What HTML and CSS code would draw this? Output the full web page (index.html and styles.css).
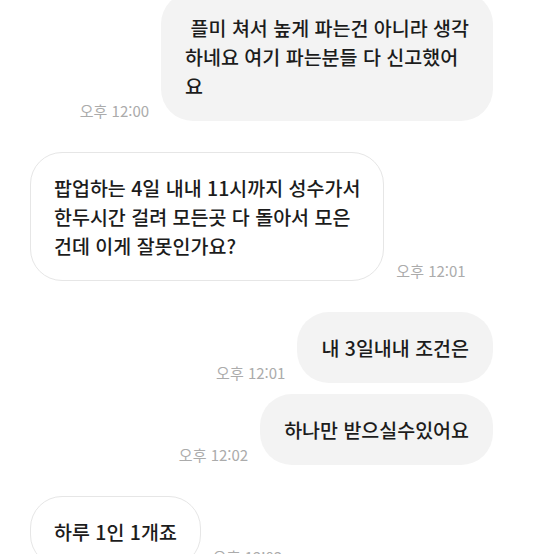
FILE: index.html
```html
<!DOCTYPE html>
<html lang="ko">
  <head>
    <meta charset="UTF-8" />
    <meta name="viewport" content="width=device-width, initial-scale=1.0" />
    <title>채팅</title>
    <link rel="stylesheet" href="styles.css">
  </head>
  <body>
    <main class="chat">
      <!-- 내 메시지 -->
      <div class="row mine">
        <span class="time">오후 12:00</span>
        <p class="bubble">&nbsp;플미 쳐서 높게 파는건 아니라 생각<br>하네요 여기 파는분들 다 신고했어<br>요</p>
      </div>

      <!-- 상대 메시지 -->
      <div class="row theirs new-sender">
        <p class="bubble">팝업하는 4일 내내 11시까지 성수가서<br>한두시간 걸려 모든곳 다 돌아서 모은<br>건데 이게 잘못인가요?</p>
        <span class="time">오후 12:01</span>
      </div>

      <div class="row mine new-sender">
        <span class="time">오후 12:01</span>
        <p class="bubble">내 3일내내 조건은</p>
      </div>

      <div class="row mine">
        <span class="time">오후 12:02</span>
        <p class="bubble">하나만 받으실수있어요</p>
      </div>

      <div class="row theirs new-sender">
        <p class="bubble">하루 1인 1개죠</p>
        <span class="time">오후 12:03</span>
      </div>
    </main>
  </body>
</html>
```

FILE: styles.css
```css
* {
  margin: 0;
  padding: 0;
  box-sizing: border-box;
}

body {
  background-color: #fff;
  color: #1c1c1c;
  font-family: "Noto Sans CJK KR", "Noto Sans", sans-serif;
  overflow: hidden;
}

.chat {
  display: flex;
  flex-direction: column;
  gap: 11px;
  padding: 0 61px 0 30px;
  margin-top: -8px;
}

.row {
  display: flex;
  align-items: flex-end;
  gap: 12px;
}

.row.mine {
  justify-content: flex-end;
}

.row.new-sender {
  margin-top: 20px;
}

.bubble {
  font-size: 19.5px;
  font-weight: 500;
  line-height: 29px;
  padding: 21px 24px;
  border-radius: 32px;
  white-space: nowrap;
}

.mine .bubble {
  background-color: #f3f3f3;
}

.theirs .bubble {
  background-color: #fff;
  border: 1px solid #e6e6e6;
  padding: 20px 23px;
}

.time {
  font-size: 15px;
  line-height: 18px;
  color: #ababab;
  margin-bottom: 1px;
}
```
